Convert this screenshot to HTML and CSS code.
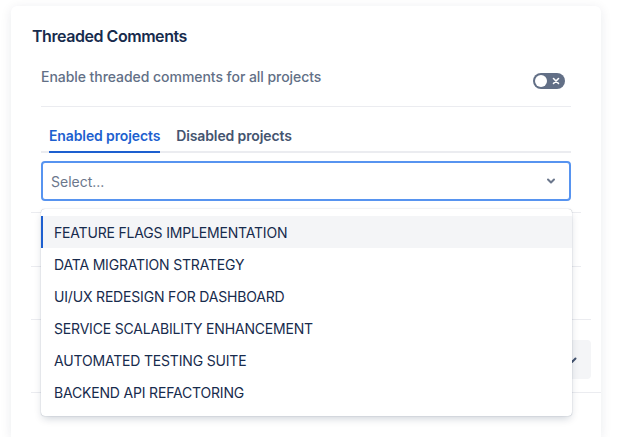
FILE: index.html
```html
<!DOCTYPE html>
<html lang="en">
<head>
<meta charset="utf-8">
<title>Threaded Comments</title>
<link rel="stylesheet" href="styles.css">
</head>
<body>
<div class="card">
  <h2 class="title">Threaded Comments</h2>
  <div class="section">
    <div class="toggle-row">
      <span class="toggle-label">Enable threaded comments for all projects</span>
      <span class="toggle">
        <span class="knob"></span>
        <svg class="toggle-x" width="8" height="8" viewBox="0 0 8 8"><path d="M1.5 1.5l5 5M6.5 1.5l-5 5" stroke="#fff" stroke-width="1.6" stroke-linecap="round"/></svg>
      </span>
    </div>
    <div class="tabs">
      <span class="tab active">Enabled projects</span>
      <span class="tab">Disabled projects</span>
    </div>
    <div class="select-wrap">
      <div class="select">
        <span class="placeholder">Select...</span>
        <svg class="chev" width="12" height="12" viewBox="0 0 12 12"><path d="M3 4.5l3 3 3-3" fill="none" stroke="#6b778c" stroke-width="2" stroke-linecap="round" stroke-linejoin="round"/></svg>
      </div>
      <ul class="menu">
        <li class="item focused">FEATURE FLAGS IMPLEMENTATION</li>
        <li class="item">DATA MIGRATION STRATEGY</li>
        <li class="item">UI/UX REDESIGN FOR DASHBOARD</li>
        <li class="item">SERVICE SCALABILITY ENHANCEMENT</li>
        <li class="item">AUTOMATED TESTING SUITE</li>
        <li class="item">BACKEND API REFACTORING</li>
      </ul>
    </div>
  </div>
  <div class="behind">
    <div class="brow"></div>
    <div class="brow short"></div>
    <div class="bfoot">
      <div class="gbox">
        <svg class="gchev" width="12" height="12" viewBox="0 0 12 12"><path d="M2.5 4.5l3.5 3.5 3.5-3.5" fill="none" stroke="#42526e" stroke-width="2" stroke-linecap="round" stroke-linejoin="round"/></svg>
      </div>
    </div>
    <div class="bline"></div>
  </div>
</div>
</body>
</html>
```
FILE: styles.css
```css
* { box-sizing: border-box; }
html, body { margin: 0; padding: 0; }
body {
  background: #ffffff;
  font-family: Inter, "Noto Sans", "Liberation Sans", sans-serif;
  color: #172b4d;
  width: 618px;
  height: 437px;
  overflow: hidden;
  padding: 6px 17px 0 11px;
}
.card {
  width: 590px;
  height: 431px;
  overflow: hidden;
  background: #fff;
  border-radius: 6px 6px 0 0;
  box-shadow: 0 2px 12px rgba(9, 30, 66, 0.09);
  padding: 20px 20px 0 20px;
}
.title {
  margin: 0;
  font-size: 16px;
  line-height: 20px;
  font-weight: 600;
  letter-spacing: -0.45px;
  color: #172b4d;
  padding-left: 1px;
}
.section {
  margin: 0 10px;
}
.toggle-row {
  display: flex;
  justify-content: space-between;
  align-items: flex-start;
  margin-top: 14px;
  padding: 7px 0 17px;
  border-bottom: 1px solid #ebecf0;
}
.toggle-label {
  font-size: 14px;
  line-height: 20px;
  font-weight: 500;
  letter-spacing: -0.05px;
  color: #626f86;
}
.toggle {
  position: relative;
  width: 32px;
  height: 16px;
  border-radius: 8px;
  background: #626f86;
  margin-top: 6px;
  margin-right: 6px;
  display: flex;
  align-items: center;
  justify-content: flex-end;
  padding-right: 5px;
}
.knob {
  position: absolute;
  left: 2px;
  top: 2px;
  width: 12px;
  height: 12px;
  border-radius: 50%;
  background: #fff;
}
.toggle-x { display: block; }
.tabs {
  display: flex;
  margin-top: 16px;
  border-bottom: 2px solid #ebecf0;
}
.tab {
  position: relative;
  padding: 3px 8px 5px;
  font-size: 14px;
  line-height: 20px;
  font-weight: 600;
  letter-spacing: -0.12px;
  color: #44546f;
}
.tab.active { color: #1d5fcf; }
.tab.active::after {
  content: "";
  position: absolute;
  left: 8px;
  right: 8px;
  bottom: -2px;
  height: 2px;
  background: #1d5fcf;
}
.select-wrap {
  position: relative;
  margin-top: 8px;
}
.select {
  height: 40px;
  border: 2px solid #5794f0;
  border-radius: 4px;
  display: flex;
  align-items: center;
  justify-content: space-between;
  padding: 0 12px 0 8px;
}
.placeholder {
  font-size: 14px;
  color: #6b778c;
}
.chev { display: block; }
.menu {
  position: absolute;
  z-index: 5;
  top: 48px;
  left: 0;
  width: 531px;
  margin: 0;
  padding: 7px 0 8px;
  list-style: none;
  background: #fff;
  border-radius: 4px;
  box-shadow: 0 4px 8px -2px rgba(9, 30, 66, 0.22), 0 0 1px rgba(9, 30, 66, 0.45);
}
.item {
  height: 32px;
  display: flex;
  align-items: center;
  padding-left: 11px;
  border-left: 2px solid transparent;
  font-size: 14px;
  letter-spacing: -0.18px;
  color: #172b4d;
}
.item.focused {
  background: #f4f5f7;
  border-left-color: #1d5fcf;
}
.behind {
  margin-top: 11px;
}
.brow {
  height: 54px;
  border-top: 1px solid #ebecf0;
}
.brow.short { height: 53px; }
.bfoot {
  border-top: 1px solid #ebecf0;
  height: 73px;
  display: flex;
  justify-content: flex-end;
  padding-top: 20px;
  margin-right: -10px;
}
.gbox {
  width: 60px;
  height: 39px;
  background: #f4f5f7;
  border-radius: 4px;
  display: flex;
  align-items: center;
  padding-left: 35px;
}
.gchev { display: block; }
.bline {
  border-top: 1px solid #ebecf0;
  margin-right: -20px;
}
```
